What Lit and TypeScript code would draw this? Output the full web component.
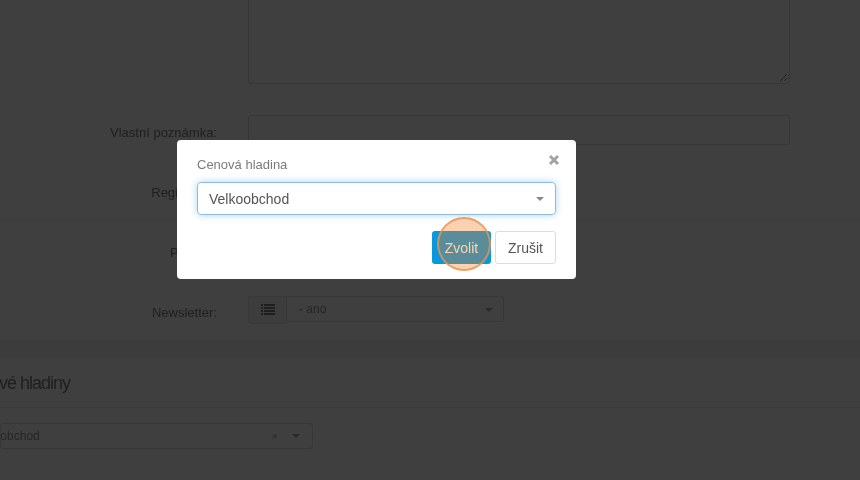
import { html, css, LitElement } from 'lit';
import { customElement } from 'lit/decorators.js';

@customElement('app-root')
export class AppRoot extends LitElement {
  static styles = css`
    :host {
      display: block;
      font-family: 'Liberation Sans', Arial, sans-serif;
    }

    .page {
      position: relative;
      width: 860px;
      height: 480px;
      overflow: hidden;
      background-color: #3f3f3f;
      color: #1f1f1f;
      font-size: 13px;
      filter: blur(0.35px);
    }

    .form {
      display: flex;
      flex-direction: column;
      height: 339px;
    }

    .row {
      display: grid;
      grid-template-columns: 217px 1fr;
      column-gap: 31px;
      padding-right: 70px;
    }

    .label {
      text-align: right;
      line-height: 16px;
    }

    .textarea {
      position: relative;
      height: 105px;
      margin-top: -21px;
      border: 1px solid #373737;
      border-radius: 3px;
      box-sizing: border-box;
    }

    .grip {
      position: absolute;
      right: 1px;
      bottom: 1px;
    }

    .note-row {
      margin-top: 31px;
      align-items: start;
    }

    .note-row .label {
      padding-top: 10px;
    }

    .input {
      height: 30px;
      border: 1px solid #373737;
      border-radius: 3px;
      box-sizing: border-box;
    }

    .reg-row {
      margin-top: 40px;
      height: 34px;
      border-bottom: 1px solid #3b3b3b;
      padding-right: 0;
    }

    .plain-row {
      margin-top: 25px;
      height: 16px;
    }

    .news-row {
      margin-top: 35px;
      align-items: start;
    }

    .news-row .label {
      padding-top: 9px;
    }

    .news-select {
      display: flex;
      width: 256px;
      height: 26px;
      border: 1px solid #373737;
      border-radius: 3px;
      box-sizing: border-box;
    }

    .addon {
      display: flex;
      align-items: center;
      justify-content: center;
      width: 39px;
      height: 28px;
      margin: -1px 0 -1px -1px;
      background-color: #3d3d3d;
      border: 1px solid #383838;
      border-radius: 3px 0 0 3px;
      box-sizing: border-box;
    }

    .news-value {
      flex: 1;
      padding-left: 12px;
      font-size: 12px;
      line-height: 24px;
      color: #262626;
    }

    .caret {
      width: 0;
      height: 0;
      border-left: 4px solid transparent;
      border-right: 4px solid transparent;
      border-top: 4px solid #2a2a2a;
    }

    .news-select .caret {
      margin: 11px 10px 0 0;
    }

    .band {
      height: 19px;
      background-color: #3c3c3c;
      border-bottom: 1px solid #3d3d3d;
    }

    .section-head {
      height: 48px;
      border-bottom: 1px solid #3b3b3b;
      overflow: hidden;
    }

    .section-title {
      margin: 0 0 0 -40px;
      font-size: 18px;
      font-weight: 400;
      line-height: 48px;
      letter-spacing: -1px;
      color: #1f1f1f;
      white-space: nowrap;
    }

    .price-select {
      display: flex;
      align-items: center;
      width: 313px;
      height: 26px;
      margin-top: 15px;
      border: 1px solid #373737;
      border-radius: 3px;
      box-sizing: border-box;
      overflow: hidden;
    }

    .price-value {
      flex: 1;
      margin-left: -30px;
      font-size: 12px;
      color: #262626;
    }

    .clear {
      font-size: 11px;
      color: #2a2a2a;
      margin-right: 14px;
    }

    .price-select .caret {
      margin-right: 12px;
    }

    .modal {
      position: absolute;
      left: 177px;
      top: 140px;
      width: 399px;
      height: 139px;
      padding: 17px 20px 0;
      background-color: #fff;
      border-radius: 4px;
      box-sizing: border-box;
      display: flex;
      flex-direction: column;
    }

    .modal-head {
      display: flex;
      justify-content: space-between;
      height: 25px;
      color: #7b7b7b;
      font-size: 13px;
      line-height: 16px;
    }

    .close {
      margin: -3px -4px 0 0;
      display: block;
    }

    .select {
      display: flex;
      align-items: center;
      justify-content: space-between;
      height: 33px;
      padding: 0 11px;
      border: 1px solid #8fbcdc;
      border-radius: 4px;
      box-sizing: border-box;
      box-shadow: 0 0 7px rgba(102, 175, 233, 0.55);
      font-size: 14px;
      color: #555;
    }

    .select .caret {
      border-top-color: #888;
    }

    .actions {
      display: flex;
      justify-content: flex-end;
      gap: 4px;
      margin-top: 16px;
    }

    .btn {
      display: flex;
      align-items: center;
      justify-content: center;
      height: 33px;
      border-radius: 3px;
      box-sizing: border-box;
      font-size: 14px;
    }

    .btn-primary {
      width: 59px;
      background-color: #0b97dc;
      color: #fff;
    }

    .btn-default {
      width: 61px;
      border: 1px solid #ddd;
      color: #555;
    }

    .click-marker {
      position: absolute;
      left: 437px;
      top: 217px;
      width: 54px;
      height: 54px;
      border: 2px solid rgba(228, 150, 85, 0.8);
      border-radius: 50%;
      background-color: rgba(243, 123, 23, 0.34);
      box-sizing: border-box;
    }
  `;

  render() {
    return html`
      <div class="page">
        <div class="form">
          <div class="row">
            <span></span>
            <div class="textarea">
              <svg class="grip" width="9" height="9" viewBox="0 0 9 9">
                <path d="M1 8 8 1M5 8 8 5" stroke="#222" stroke-width="1" fill="none" />
              </svg>
            </div>
          </div>
          <div class="row note-row">
            <span class="label">Vlastní poznámka:</span>
            <div class="input"></div>
          </div>
          <div class="row reg-row">
            <span class="label">Registrace:</span>
          </div>
          <div class="row plain-row">
            <span class="label">Pohlaví:</span>
          </div>
          <div class="row news-row">
            <span class="label">Newsletter:</span>
            <div class="news-select">
              <span class="addon">
                <svg width="14" height="12" viewBox="0 0 14 12" fill="#1f1f1f">
                  <path d="M0 0h2v2H0zM3 0h11v2H3zM0 3h2v2H0zM3 3h11v2H3zM0 6h2v2H0zM3 6h11v2H3zM0 9h2v2H0zM3 9h11v2H3z" />
                </svg>
              </span>
              <span class="news-value">- ano</span>
              <span class="caret"></span>
            </div>
          </div>
        </div>
        <div class="band"></div>
        <div class="section-head">
          <h2 class="section-title">Cenové hladiny</h2>
        </div>
        <div class="price-select">
          <span class="price-value">Velkoobchod</span>
          <span class="clear">×</span>
          <span class="caret"></span>
        </div>

        <div class="modal">
          <div class="modal-head">
            <span>Cenová hladina</span>
            <svg class="close" width="12" height="12" viewBox="0 0 12 12">
              <path d="M2 2 10 10M10 2 2 10" stroke="#a3a3a3" stroke-width="3" fill="none" />
            </svg>
          </div>
          <div class="select">
            <span>Velkoobchod</span>
            <span class="caret"></span>
          </div>
          <div class="actions">
            <div class="btn btn-primary">Zvolit</div>
            <div class="btn btn-default">Zrušit</div>
          </div>
        </div>
        <div class="click-marker"></div>
      </div>
    `;
  }
}
